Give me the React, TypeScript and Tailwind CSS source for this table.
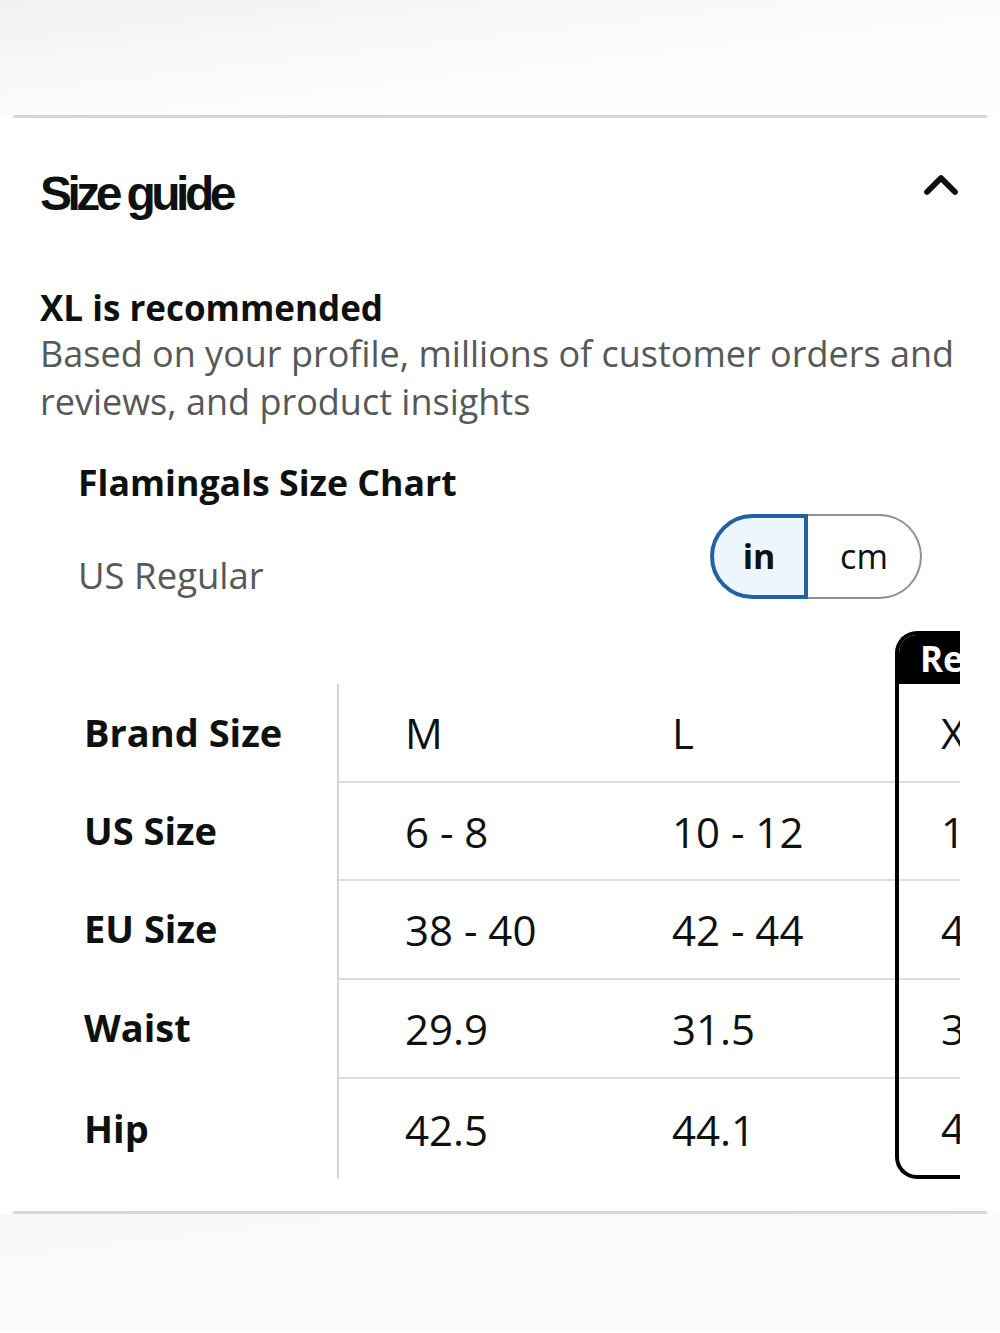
import { ChevronUp } from "lucide-react";

const rows = [
  { label: "Brand Size", m: "M", l: "L", xl: "XL" },
  { label: "US Size", m: "6 - 8", l: "10 - 12", xl: "14 - 16" },
  { label: "EU Size", m: "38 - 40", l: "42 - 44", xl: "46 - 48" },
  { label: "Waist", m: "29.9", l: "31.5", xl: "33.1" },
  { label: "Hip", m: "42.5", l: "44.1", xl: "45.7" },
];

const cellHeights = ["h-[97px]", "h-[98px]", "h-[99px]", "h-[99px]", "h-[102px]"];

export default function App() {
  return (
    <div className="min-h-[1333px] w-[1000px] bg-white font-['Open_Sans',sans-serif] text-[#0f1111]">
      <div className="h-[115px] bg-gradient-to-br from-[#f1f1f1] via-[#fbfbfb] to-[#fefefe]" />
      <div className="mx-[13px] h-[3px] bg-[#d8d8d8]" />

      <div className="px-[40px]">
        <div className="flex items-center justify-between pt-[52px]">
          <h2 className="font-['Liberation_Sans',Arial,sans-serif] text-[48px] font-bold leading-[48px] tracking-[-0.095em]">
            Size guide
          </h2>
          <ChevronUp className="-mr-[9px] -mt-[18px] h-[56px] w-[56px]" strokeWidth={2.5} />
        </div>

        <div className="mt-[68px]">
          <p className="text-[35px] font-bold leading-[44px]">XL is recommended</p>
          <p className="text-[36px] leading-[48px] text-[#565959]">
            Based on your profile, millions of customer orders and reviews, and product insights
          </p>
        </div>
      </div>

      <div className="pl-[78px] pr-[40px]">
        <p className="mt-[34px] text-[35.7px] font-bold leading-[44px]">Flamingals Size Chart</p>

        <div className="mt-[10px] flex items-end justify-between pr-[38px]">
          <p className="mb-[2px] text-[36.5px] leading-[44px] text-[#565959]">US Regular</p>
          <div className="flex h-[85px]">
            <div className="flex w-[98px] items-center justify-center rounded-l-full border-4 border-[#2162a1] bg-[#edf6fc] text-[34px] font-bold">
              in
            </div>
            <div className="flex w-[114px] items-center justify-center rounded-r-full border-2 border-l-0 border-[#8d9096] text-[34px]">
              cm
            </div>
          </div>
        </div>

        <div className="mt-[32px] flex w-[882px] overflow-hidden">
          <div className="w-[259px] shrink-0 pt-[53px]">
            {rows.map((r, i) => (
              <div key={r.label} className={`flex items-center pl-[6px] text-[38px] font-bold ${cellHeights[i]}`}>
                {r.label}
              </div>
            ))}
          </div>

          <div className="shrink-0 pt-[53px]">
            <div className="flex border-l-2 border-[#d5d5d5]">
              <div className="w-[267px]">
                {rows.map((r, i) => (
                  <div
                    key={r.label}
                    className={`flex items-center pl-[66px] text-[42px] ${cellHeights[i]} ${i > 0 ? "border-t-2 border-[#dcdcdc]" : ""}`}
                  >
                    {r.m}
                  </div>
                ))}
              </div>
              <div className="w-[289px]">
                {rows.map((r, i) => (
                  <div
                    key={r.label}
                    className={`flex items-center pl-[66px] text-[42px] ${cellHeights[i]} ${i > 0 ? "border-t-2 border-[#dcdcdc]" : ""}`}
                  >
                    {r.l}
                  </div>
                ))}
              </div>
            </div>
          </div>

          <div className="w-[220px] shrink-0 overflow-hidden rounded-l-[22px] border-4 border-r-0 border-black">
            <div className="flex h-[49px] items-center bg-black pl-[21px] text-[35px] font-bold text-white">
              Recommended
            </div>
            {rows.map((r, i) => (
              <div
                key={r.label}
                className={`flex items-center pl-[42px] text-[42px] ${i === 0 ? "h-[97px]" : i === 4 ? "h-[98px]" : cellHeights[i]} ${i > 0 ? "border-t-2 border-[#dcdcdc]" : ""}`}
              >
                {r.xl}
              </div>
            ))}
          </div>
        </div>
      </div>

      <div className="mx-[13px] mt-[32px] h-[3px] bg-[#d8d8d8]" />
      <div className="h-[117px] bg-gradient-to-br from-[#f8f8f8] via-[#fbfbfb] to-[#f9f9f9]" />
    </div>
  );
}
